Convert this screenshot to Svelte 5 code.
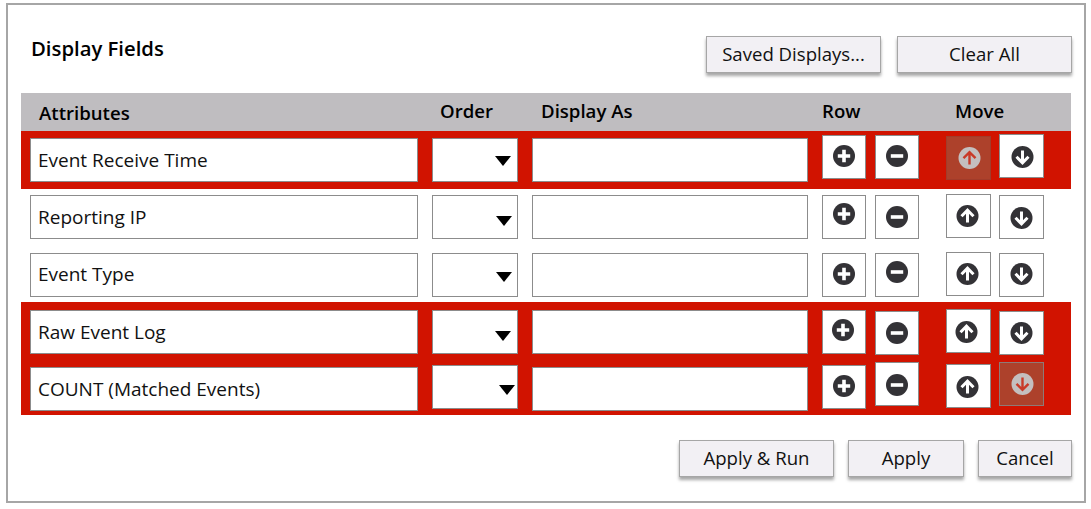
<script lang="ts">
    type Ctl = { top: number; dx?: number; dy?: number; off?: boolean };
    type Row = {
        label: string;
        height: number;
        hot: boolean;
        input: number;
        select: number;
        textLine: number;
        arrowX: number;
        arrowY: number;
        plus: Ctl;
        minus: Ctl;
        up: Ctl;
        down: Ctl;
    };

    // offsets are from the top of each row, the rows in the source are not quite aligned
    const rows: Row[] = [
        { label: 'Event Receive Time', height: 58, hot: true, input: 7, select: 7, textLine: 43, arrowX: 62, arrowY: 17,
            plus: { top: 4, dy: -1 }, minus: { top: 4, dy: -1 }, up: { top: 5, dx: 0.5, off: true }, down: { top: 3, dx: 0.5, dy: 1 } },
        { label: 'Reporting IP', height: 57, hot: false, input: 6, select: 6, textLine: 43, arrowX: 63, arrowY: 20,
            plus: { top: 6, dy: -3 }, minus: { top: 6 }, up: { top: 5, dx: -1.5 }, down: { top: 6, dx: -0.5, dy: 1 } },
        { label: 'Event Type', height: 56, hot: false, input: 7, select: 7, textLine: 41, arrowX: 63, arrowY: 18,
            plus: { top: 7, dy: -1 }, minus: { top: 7, dy: -3 }, up: { top: 6, dx: -1.5 }, down: { top: 7, dx: -0.5, dy: -1 } },
        { label: 'Raw Event Log', height: 57, hot: true, input: 8, select: 8, textLine: 43, arrowX: 62, arrowY: 20,
            plus: { top: 8, dx: -1, dy: -2 }, minus: { top: 9 }, up: { top: 7, dx: -2.5, dy: 1 }, down: { top: 9, dx: -0.5 } },
        { label: 'COUNT (Matched Events)', height: 56, hot: true, input: 8, select: 6, textLine: 43, arrowX: 66, arrowY: 19,
            plus: { top: 6, dy: -1 }, minus: { top: 3, dy: 1 }, up: { top: 5, dx: -1.5, dy: 1 }, down: { top: 3, dx: 0.5, off: true } }
    ];

    const offset = (c: Ctl) => `margin-top:${c.top}px`;
    const shift = (c: Ctl) => `translate:${c.dx ?? 0}px ${c.dy ?? 0}px`;
</script>

{#snippet glyph(kind: string, c: Ctl)}
    <svg class="glyph" style={shift(c)} width="24" height="24" viewBox="0 0 24 24" aria-hidden="true">
        <circle class="disc" cx="12" cy="12" r="11" />
        {#if kind === 'plus'}
            <path class="mark thick" d="M12 5.800v12.400M5.800 12h12.400" />
        {:else if kind === 'minus'}
            <path class="mark thick" d="M5.800 12h12.400" />
        {:else if kind === 'up'}
            <path class="mark" d="M12 18.500V6.500M6 12.200l6-6 6 6" />
        {:else}
            <path class="mark" d="M12 5.500v12M6 11.800l6 6 6-6" />
        {/if}
    </svg>
{/snippet}

{#snippet iconButton(kind: string, c: Ctl, wide: boolean)}
    <button class="icon-btn" class:wide class:off={c.off} style={offset(c)} aria-label={kind}>
        {@render glyph(kind, c)}
    </button>
{/snippet}

<main class="frame">
    <header class="top">
        <h1>Display Fields</h1>
        <div class="top-actions">
            <button class="btn saved">Saved Displays...</button>
            <button class="btn clear">Clear All</button>
        </div>
    </header>

    <section class="table">
        <div class="head">
            <span class="h-attr">Attributes</span>
            <span class="h-order">Order</span>
            <span class="h-display">Display As</span>
            <span class="h-row">Row</span>
            <span class="h-move">Move</span>
        </div>
        {#each rows as row}
            <div class="row" class:hot={row.hot} style="height:{row.height}px">
                <div class="field attr" style="margin-top:{row.input}px;line-height:{row.textLine}px">{row.label}</div>
                <div class="field order" style="margin-top:{row.select}px">
                    <i class="caret" style="left:{row.arrowX}px;top:{row.arrowY}px"></i>
                </div>
                <div class="field display" style="margin-top:{row.input}px"></div>
                <div class="row-btns">
                    {@render iconButton('plus', row.plus, false)}
                    {@render iconButton('minus', row.minus, false)}
                </div>
                <div class="move-btns">
                    {@render iconButton('up', row.up, true)}
                    {@render iconButton('down', row.down, true)}
                </div>
            </div>
        {/each}
    </section>

    <footer class="bottom">
        <button class="btn run">Apply &amp; Run</button>
        <button class="btn apply">Apply</button>
        <button class="btn cancel">Cancel</button>
    </footer>
</main>

<style>
    :global(body) {
        margin: 0;
        background: #fff;
    }

    .frame {
        box-sizing: border-box;
        width: 1080px;
        height: 500px;
        margin: 3px 0 0 6px;
        border: 2px solid #a6a6a6;
        padding: 31px 13px 0 13px;
        font-family: 'Open Sans', 'Noto Sans', sans-serif;
        font-size: 18.6px;
        color: #111;
        background: #fff;
    }

    .top {
        display: flex;
        justify-content: space-between;
        height: 57px;
        padding-left: 10px;
    }

    h1 {
        margin: 0;
        font-size: 20.3px;
        font-weight: 600;
        line-height: 25px;
        color: #000;
    }

    .top-actions {
        display: flex;
        gap: 16px;
        margin-right: -1px;
    }

    .btn {
        box-sizing: border-box;
        height: 37px;
        padding: 0 0 2px;
        border: 1px solid #a6a6a6;
        background: #f2f0f4;
        box-shadow: 0 3px 3px rgba(0, 0, 0, 0.35);
        font: inherit;
        color: #111;
    }

    .saved { width: 175px; }
    .clear { width: 175px; }
    .run { width: 155px; }
    .apply { width: 116px; }
    .cancel { width: 94px; }

    .head {
        display: flex;
        height: 38px;
        background: #bfbdc0;
        font-weight: 600;
        color: #000;
        line-height: 26px;
    }

    .head span { display: block; }
    .h-attr { width: 419px; padding: 7px 0 0 18px; box-sizing: border-box; }
    .h-order { width: 101px; padding-top: 5px; }
    .h-display { width: 281px; padding-top: 5px; }
    .h-row { width: 133px; padding-top: 5px; }
    .h-move { padding-top: 5px; }

    .row {
        display: flex;
        align-items: flex-start;
        box-sizing: border-box;
        padding-left: 9px;
    }

    .hot { background: #d11300; }

    .field {
        box-sizing: border-box;
        position: relative;
        flex: none;
        height: 44px;
        border: 1px solid #8c8c8c;
        background: #fff;
    }

    .attr {
        width: 388px;
        margin-right: 14px;
        padding-left: 7px;
        font-size: 19px;
        white-space: nowrap;
    }

    .order { width: 86px; margin-right: 14px; }
    .display { width: 276px; margin-right: 14px; }

    .caret {
        position: absolute;
        width: 0;
        height: 0;
        border-left: 8px solid transparent;
        border-right: 8px solid transparent;
        border-top: 10px solid #000;
    }

    .row-btns {
        display: flex;
        gap: 9px;
        width: 124px;
        flex: none;
    }

    .move-btns {
        display: flex;
        gap: 8px;
        flex: none;
    }

    .icon-btn {
        box-sizing: border-box;
        display: flex;
        align-items: center;
        justify-content: center;
        flex: none;
        width: 44px;
        height: 44px;
        padding: 0;
        border: 1px solid #8c8c8c;
        background: #fff;
    }

    .icon-btn.wide { width: 45px; }

    .glyph { display: block; }
    .disc { fill: #333236; }
    .mark {
        fill: none;
        stroke: #fff;
        stroke-width: 3;
    }
    .thick { stroke-width: 3.6; }

    .icon-btn.off {
        background: #ad412b;
        border-color: #a13c2a;
    }

    .move-btns .icon-btn.off:last-child { border-color: #8f7a76; }

    .off .disc { fill: #c4bfbf; }
    .off .mark { stroke: #c93a28; stroke-width: 2.4; }

    .bottom {
        display: flex;
        justify-content: flex-end;
        gap: 14px;
        margin-top: 25px;
        margin-right: -1px;
    }
</style>
